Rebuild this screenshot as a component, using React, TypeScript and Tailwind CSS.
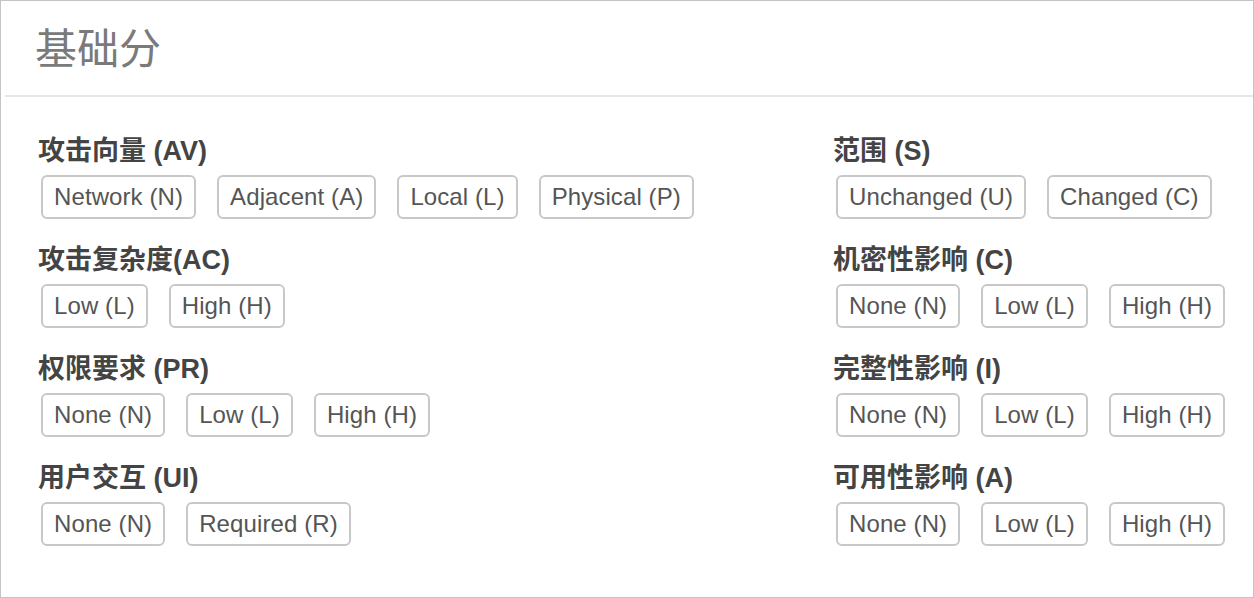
import React from 'react';

interface Metric {
  title: string;
  options: string[];
}

const leftMetrics: Metric[] = [
  { title: '攻击向量 (AV)', options: ['Network (N)', 'Adjacent (A)', 'Local (L)', 'Physical (P)'] },
  { title: '攻击复杂度(AC)', options: ['Low (L)', 'High (H)'] },
  { title: '权限要求 (PR)', options: ['None (N)', 'Low (L)', 'High (H)'] },
  { title: '用户交互 (UI)', options: ['None (N)', 'Required (R)'] },
];

const rightMetrics: Metric[] = [
  { title: '范围 (S)', options: ['Unchanged (U)', 'Changed (C)'] },
  { title: '机密性影响 (C)', options: ['None (N)', 'Low (L)', 'High (H)'] },
  { title: '完整性影响 (I)', options: ['None (N)', 'Low (L)', 'High (H)'] },
  { title: '可用性影响 (A)', options: ['None (N)', 'Low (L)', 'High (H)'] },
];

const MetricGroup: React.FC<{ metric: Metric }> = ({ metric }) => (
  <div className="flex flex-col">
    <h4 className="text-[27px] leading-[36px] font-bold text-[#444444]">{metric.title}</h4>
    <div className="mt-[6px] ml-[3px] flex gap-[21px]">
      {metric.options.map((opt) => (
        <button
          key={opt}
          className="h-[44px] px-[11px] rounded-[6px] border-2 border-[#c8c8c8] bg-white text-[24px] tracking-[0.1px] text-[#555555]"
        >
          {opt}
        </button>
      ))}
    </div>
  </div>
);

export default function App() {
  return (
    <div
      className="w-[1254px] h-[598px] border border-[#c4c4c4] bg-white flex flex-col"
      style={{ fontFamily: '"Liberation Sans", "Noto Sans CJK SC", sans-serif' }}
    >
      {/* Panel heading */}
      <div className="h-[94px] flex items-center pl-[34px] pt-[4px]">
        <h3 className="text-[42px] leading-[48px] text-[#7a7a7a]">基础分</h3>
      </div>
      <div className="ml-[4px] h-[2px] bg-[#e6e6e6]" />

      {/* Metrics */}
      <div className="grid grid-cols-[795px_1fr] pl-[37px] pt-[36px]">
        <div className="flex flex-col gap-[23px]">
          {leftMetrics.map((m) => (
            <MetricGroup key={m.title} metric={m} />
          ))}
        </div>
        <div className="flex flex-col gap-[23px]">
          {rightMetrics.map((m) => (
            <MetricGroup key={m.title} metric={m} />
          ))}
        </div>
      </div>
    </div>
  );
}
